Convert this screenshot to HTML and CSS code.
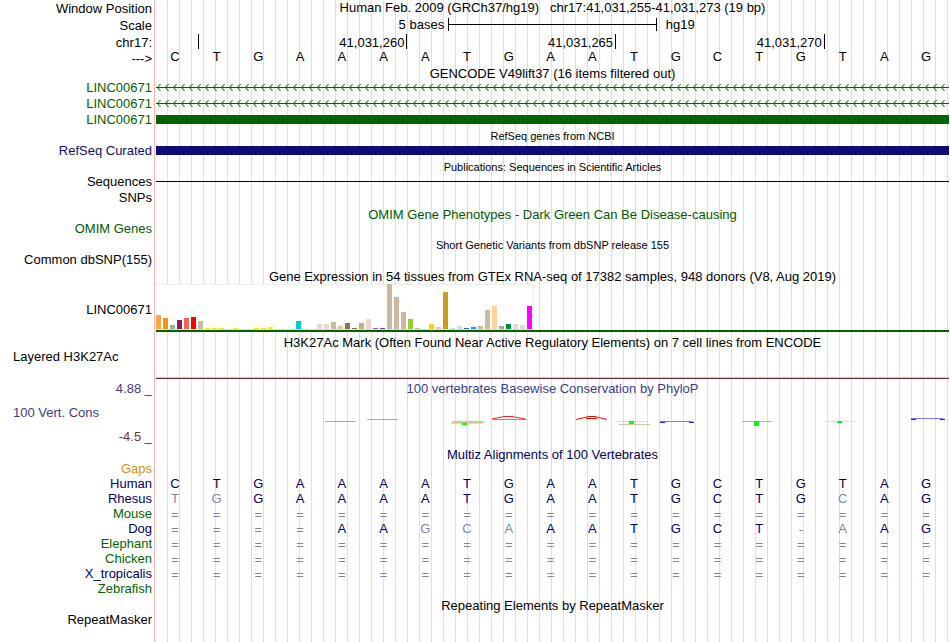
FILE: index.html
```
<!DOCTYPE html>
<html lang="en">
<head>
  <meta charset="UTF-8">
  <title>Human chr17:41,031,255-41,031,273 (hg19)</title>
  <link rel="stylesheet" href="styles.css">
</head>
<body>
  <main class="browser">
    <div class="row head">
      <div class="label">Window Position</div>
      <div class="data position"><span>Human Feb. 2009 (GRCh37/hg19)</span><span>chr17:41,031,255-41,031,273 (19 bp)</span></div>
    </div>
    <div class="row head">
      <div class="label">Scale</div>
      <div class="data columns">
        <span class="scale-size">5 bases</span>
        <span class="scale-bar"></span>
        <span class="scale-db">hg19</span>
      </div>
    </div>
    <div class="row head">
      <div class="label">chr17:</div>
      <div class="data columns">
        <span class="tick first"></span>
        <span class="tick second">41,031,260</span>
        <span class="tick third">41,031,265</span>
        <span class="tick fourth">41,031,270</span>
      </div>
    </div>
    <div class="row strand">
      <div class="label">---&gt;</div>
      <div class="data"><div class="bases" data-seq="CTGAAAATGAATGCTGTAG"></div></div>
    </div>

    <div class="row title"><div class="label"></div><div class="data">GENCODE V49lift37 (16 items filtered out)</div></div>
    <div class="row gene">
      <div class="label">LINC00671</div>
      <div class="data">
        <svg class="intron" width="100%" height="16">
          <defs>
            <pattern id="arrows" width="8" height="16" patternUnits="userSpaceOnUse">
              <path d="M0 8.5H8M4.5 5L1.5 8.5L4.5 12" fill="none" stroke="#006400"/>
            </pattern>
          </defs>
          <rect width="100%" height="16" fill="url(#arrows)"/>
        </svg>
      </div>
    </div>
    <div class="row gene">
      <div class="label">LINC00671</div>
      <div class="data">
        <svg class="intron" width="100%" height="16"><rect width="100%" height="16" fill="url(#arrows)"/></svg>
      </div>
    </div>
    <div class="row gene">
      <div class="label">LINC00671</div>
      <div class="data"><div class="exon"></div></div>
    </div>

    <div class="row title small"><div class="label"></div><div class="data">RefSeq genes from NCBI</div></div>
    <div class="row refseq">
      <div class="label">RefSeq Curated</div>
      <div class="data"><div class="exon"></div></div>
    </div>

    <div class="row title small"><div class="label"></div><div class="data">Publications: Sequences in Scientific Articles</div></div>
    <div class="row">
      <div class="label">Sequences</div>
      <div class="data"><div class="thin-line"></div></div>
    </div>
    <div class="row"><div class="label">SNPs</div><div class="data"></div></div>

    <div class="row title omim"><div class="label"></div><div class="data">OMIM Gene Phenotypes - Dark Green Can Be Disease-causing</div></div>
    <div class="row omim"><div class="label">OMIM Genes</div><div class="data"></div></div>

    <div class="row title small"><div class="label"></div><div class="data">Short Genetic Variants from dbSNP release 155</div></div>
    <div class="row"><div class="label">Common dbSNP(155)</div><div class="data"></div></div>

    <div class="row title"><div class="label"></div><div class="data">Gene Expression in 54 tissues from GTEx RNA-seq of 17382 samples, 948 donors (V8, Aug 2019)</div></div>
    <div class="row gtex">
      <div class="label">LINC00671</div>
      <div class="data">
        <div class="tissues" id="tissues"></div>
        <div class="gene-model"></div>
      </div>
    </div>

    <div class="row title"><div class="label"></div><div class="data">H3K27Ac Mark (Often Found Near Active Regulatory Elements) on 7 cell lines from ENCODE</div></div>
    <div class="row h3k">
      <div class="label wide">Layered H3K27Ac</div>
      <div class="data"><div class="signal"></div></div>
    </div>

    <div class="row title cons"><div class="label">4.88 _</div><div class="data">100 vertebrates Basewise Conservation by PhyloP</div></div>
    <div class="row phylop">
      <div class="label-stack">
        <div class="label wide">100 Vert. Cons</div>
        <div class="label minimum">-4.5 _</div>
      </div>
      <div class="data">
        <svg width="100%" height="51" viewBox="0 0 793 51" preserveAspectRatio="none" fill="none">
          <path d="M169 27.5H200M211 25.5H242" stroke="#f08c8c"/>
          <path d="M296 28H328" stroke="#cdc88c" stroke-width="2"/>
          <path d="M294 29.5H326" stroke="#b4f5b4"/>
          <path d="M306 30H311" stroke="#00ff00" stroke-width="2"/>
          <path d="M337 25.5H371" stroke="#8c8cf0"/>
          <path d="M336 25L348 22.5H356L369 25" stroke="#ff1e1e"/>
          <path d="M420 25.5L433 22.5H439L451 25.5M430 24.5H441" stroke="#ff0000"/>
          <path d="M461 27.5H491" stroke="#aaf5aa"/>
          <path d="M473 28.5H478" stroke="#00ff00" stroke-width="3"/>
          <path d="M463 30.5H494" stroke="#d2cd96"/>
          <path d="M504 27.5H535L538 28.5" stroke="#7878fa"/>
          <path d="M504 28.5H509M533 28.5H538" stroke="#1e1eff"/>
          <path d="M586 27.5H616" stroke="#50fa50"/>
          <path d="M598 29.5H603" stroke="#00ff00" stroke-width="5"/>
          <path d="M669 27.5H699" stroke="#b4fab4"/>
          <path d="M681 28H686" stroke="#00ff00" stroke-width="2"/>
          <path d="M755 24.5H786L789 25.5" stroke="#7878fa"/>
          <path d="M755 25.5H760M784 25.5H789" stroke="#1e1eff"/>
        </svg>
      </div>
    </div>

    <div class="row title multiz"><div class="label"></div><div class="data">Multiz Alignments of 100 Vertebrates</div></div>
    <div class="row gaps"><div class="label">Gaps</div><div class="data"></div></div>
    <div class="row species"><div class="label">Human</div><div class="data"><div class="bases" data-seq="CTGAAAATGAATGCTGTAG"></div></div></div>
    <div class="row species"><div class="label">Rhesus</div><div class="data"><div class="bases" data-seq="tgGAAAATGAATGCTGcAG"></div></div></div>
    <div class="row species alt"><div class="label">Mouse</div><div class="data"><div class="bases" data-seq="==================="></div></div></div>
    <div class="row species"><div class="label">Dog</div><div class="data"><div class="bases" data-seq="====AAgcaAATGCT-aAG"></div></div></div>
    <div class="row species alt"><div class="label">Elephant</div><div class="data"><div class="bases" data-seq="==================="></div></div></div>
    <div class="row species alt"><div class="label">Chicken</div><div class="data"><div class="bases" data-seq="==================="></div></div></div>
    <div class="row species"><div class="label">X_tropicalis</div><div class="data"><div class="bases" data-seq="==================="></div></div></div>
    <div class="row species alt"><div class="label">Zebrafish</div><div class="data"></div></div>

    <div class="row title"><div class="label"></div><div class="data">Repeating Elements by RepeatMasker</div></div>
    <div class="row"><div class="label">RepeatMasker</div><div class="data"></div></div>
  </main>
  <script src="script.js"></script>
</body>
</html>
```
FILE: styles.css
```
body {
  margin: 0;
  background-color: #fff;
  color: #000;
  font-family: "Liberation Sans", Arial, Helvetica, sans-serif;
  font-size: 13px;
}
.browser {
  box-sizing: border-box;
  min-height: 100vh;
  padding-right: 1px;
  /* red divider, blank label column, then a guide line every 12px */
  background:
    linear-gradient(#ffb4b4, #ffb4b4) 154px 0 / 1px 100% no-repeat,
    linear-gradient(#fff, #fff) 0 0 / 156px 100% no-repeat,
    linear-gradient(to right, #dcdcf5 1px, transparent 1px) 11px 0 / 12px 100%;
}
.row {
  display: grid;
  grid-template-columns: 156px 1fr;
  height: 16px;
  line-height: 17px;
  white-space: nowrap;
}
.label {
  padding-right: 4px;
  text-align: right;
}
.label.wide {
  padding-left: 13px;
  text-align: left;
}
.data {
  min-width: 0;
}

/* header */
.head {
  height: 17px;
}
.position {
  display: flex;
  justify-content: center;
  gap: 11px;
  line-height: 15px;
}
.columns {
  display: grid;
  grid-template-columns: repeat(19, minmax(0, 1fr));
}
.scale-size {
  grid-column: 3 / 8;
  padding-right: 4px;
  text-align: right;
  line-height: 15px;
}
.scale-bar {
  grid-column: 8 / 13;
  height: 13px;
  margin-top: 1px;
  border: solid #000;
  border-width: 0 1px;
  background: linear-gradient(#000, #000) 0 6px / 100% 1px no-repeat;
}
.scale-db {
  grid-column: 13 / 15;
  padding-left: 9px;
  line-height: 15px;
}
.tick {
  height: 15px;
  margin-right: -1px;
  padding-right: 2px;
  border-right: 1px solid #000;
  text-align: right;
}
.tick.first { grid-column: 1 / 2; }
.tick.second { grid-column: 2 / 7; }
.tick.third { grid-column: 7 / 12; }
.tick.fourth { grid-column: 12 / 17; }
.strand {
  height: 13px;
  line-height: 15px;
}
.strand .bases {
  line-height: 11px;
}

/* one column per base */
.bases {
  display: grid;
  grid-template-columns: repeat(19, minmax(0, 1fr));
  margin: 0 2px 0 -2px;
  text-align: center;
}

/* track titles */
.title {
  box-sizing: border-box;
  height: 15px;
  padding-top: 3px;
  line-height: 13px;
}
.title .data {
  text-align: center;
}
.small {
  font-size: 11px;
  line-height: 12px;
}

/* gene tracks */
.gene { color: #006400; }
.refseq { color: #0c0c78; }
.omim { color: #005a00; }
.intron { display: block; }
.exon {
  height: 9px;
  margin-top: 4px;
  background-color: currentColor;
}
.thin-line {
  height: 1px;
  margin-top: 8px;
  background-color: #000;
}

/* expression */
.gtex {
  height: 51px;
}
.gtex .label {
  padding-top: 19px;
}
.tissues {
  box-sizing: border-box;
  display: flex;
  align-items: flex-end;
  gap: 2px;
  width: 378px;
  height: 46px;
  margin-top: 2px;
  border-bottom: 1px solid #dcdcdc;
  background-color: #fff;
  box-shadow: inset -1px 1px #eee;
}
.tissue {
  width: 5px;
}
.gene-model {
  height: 2px;
  background-color: #006400;
}

/* signal tracks */
.h3k {
  height: 31px;
}
.signal {
  height: 1px;
  margin-top: 29px;
  background-color: #ffc864;
  border-bottom: 1px solid #78282d;
}
.cons, .phylop {
  color: #3c3c8c;
}
.phylop {
  height: 51px;
}
.phylop svg {
  display: block;
}
.label-stack {
  display: flex;
  flex-direction: column;
  justify-content: space-between;
  padding-top: 10px;
}
.minimum {
  color: #783232;
}

/* alignments */
.multiz { color: #000064; }
.gaps { color: #e68c14; }
.species {
  height: 15px;
  line-height: 15px;
  color: #000064;
}
.species.alt .label { color: #006400; }
.mismatch { color: #8282b4; }
.unaligned {
  padding-top: 1px;
}
```
FILE: script.js
```
// [height, color] for each of the 54 tissues
const tissues = [
  [14, '#ffa54f'], [11, '#ee9a00'], [4, '#8fbc8f'], [9, '#8b1c62'], [11, '#ee6a50'], [12, '#ff0000'],
  [8, '#cdb79e'], [1, '#eeee00'], [1, '#eeee00'], [1, '#eeee00'], [0, '#eeee00'], [1, '#eeee00'],
  [0, '#eeee00'], [0, '#eeee00'], [1, '#eeee00'], [1, '#eeee00'], [2, '#eeee00'], [0, '#eeee00'],
  [0, '#eeee00'], [0, '#eeee00'], [8, '#00cdcd'], [0, '#ee82ee'], [0, '#9ac0cd'], [5, '#eed5d2'],
  [5, '#eed5d2'], [7, '#cdb79e'], [3, '#eec591'], [6, '#8b7355'], [1, '#8b7355'], [6, '#cdaa7d'],
  [10, '#eed5d2'], [1, '#b452cd'], [1, '#7a378b'], [45, '#cdb79e'], [32, '#cdb79e'], [17, '#cdb79e'],
  [10, '#9acd32'], [1, '#cdb79e'], [0, '#7a67ee'], [5, '#ffd700'], [2, '#ffb6c1'], [37, '#cd9b1d'],
  [1, '#b4eeb4'], [3, '#d9d9d9'], [1, '#3a5fcd'], [2, '#1e90ff'], [3, '#cdb79e'], [19, '#cdb79e'],
  [23, '#ffd39b'], [3, '#a6a6a6'], [5, '#008b45'], [5, '#eed5d2'], [4, '#eed5d2'], [23, '#ff00ff']
];

const chart = document.getElementById('tissues');
tissues.forEach(([height, color]) => {
  const bar = document.createElement('div');
  bar.className = 'tissue';
  bar.style.height = height + 'px';
  bar.style.backgroundColor = color;
  chart.appendChild(bar);
});

// lower case letters are bases that differ from human
document.querySelectorAll('.bases').forEach(row => {
  for (const ch of row.dataset.seq) {
    const base = document.createElement('span');
    base.textContent = ch.toUpperCase();
    if (!/[A-Z]/.test(ch)) base.classList.add('mismatch');
    if (ch === '=' || ch === '-') base.classList.add('unaligned');
    row.appendChild(base);
  }
});
```
